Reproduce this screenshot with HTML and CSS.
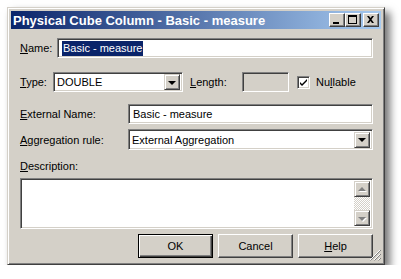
FILE: index.html
```html
<!DOCTYPE html>
<html lang="en">
<head>
  <meta charset="UTF-8" />
  <title>Physical Cube Column - Basic - measure</title>
  <link rel="stylesheet" href="styles.css">
</head>
<body>
  <div class="window">
    <div class="titlebar">
      <span class="title">Physical Cube Column - Basic - measure</span>
      <div class="caption-buttons">
        <span class="cap-btn">
          <svg width="14" height="12" viewBox="0 0 14 12"><rect x="3" y="8" width="6" height="2" fill="#000"/></svg>
        </span>
        <span class="cap-btn">
          <svg width="14" height="12" viewBox="0 0 14 12"><rect x="2.5" y="1.5" width="8" height="8" fill="none" stroke="#000"/><rect x="2" y="1" width="9" height="2" fill="#000"/></svg>
        </span>
        <span class="cap-btn close">
          <svg width="14" height="12" viewBox="0 0 14 12"><path d="M3 2h2l1.5 2 1.5-2h2l-2.5 3.5 2.5 3.5h-2l-1.5-2-1.5 2h-2l2.5-3.5z" fill="#000"/></svg>
        </span>
      </div>
    </div>

    <div class="content">
      <div class="row row-name">
        <span class="lbl lbl-name"><u>N</u>ame:</span>
        <div class="field grow"><span class="selected">Basic - measure</span></div>
      </div>

      <div class="row row-type">
        <span class="lbl lbl-type"><u>T</u>ype:</span>
        <div class="field combo combo-type">
          <span>DOUBLE</span>
          <span class="drop"><span class="arrow"></span></span>
        </div>
        <span class="lbl lbl-length"><u>L</u>ength:</span>
        <div class="field disabled length"></div>
        <span class="check">
          <svg width="9" height="9" viewBox="0 0 9 9"><path d="M1 4l2 2 5-5v2l-5 5-2-2z" fill="#000"/></svg>
        </span>
        <span class="check-lbl">Nu<u>l</u>lable</span>
      </div>

      <div class="row row-ext">
        <span class="lbl lbl-wide"><u>E</u>xternal Name:</span>
        <div class="field grow">Basic - measure</div>
      </div>

      <div class="row row-agg">
        <span class="lbl lbl-wide"><u>A</u>ggregation rule:</span>
        <div class="field combo grow">
          <span>External Aggregation</span>
          <span class="drop"><span class="arrow"></span></span>
        </div>
      </div>

      <div class="desc-lbl"><u>D</u>escription:</div>
      <div class="field textarea">
        <div class="scrollbar">
          <span class="sb-btn"><span class="arrow up"></span></span>
          <span class="sb-track"></span>
          <span class="sb-btn"><span class="arrow"></span></span>
        </div>
      </div>

      <div class="buttons">
        <span class="btn default">OK</span>
        <span class="btn">Cancel</span>
        <span class="btn"><u>H</u>elp</span>
      </div>
    </div>

    <svg class="grip" width="12" height="12" viewBox="0 0 12 12">
      <path d="M11 1L1 11M11 5L5 11M11 9L9 11" stroke="#fff" stroke-width="1"/>
      <path d="M12 1L1 12M12 5L5 12M12 9L9 12" stroke="#808080" stroke-width="1" transform="translate(0.5 -0.5)"/>
    </svg>
  </div>
</body>
</html>
```

FILE: styles.css
```css
html, body {
  margin: 0;
  padding: 0;
  background: #fff;
  font-family: "Liberation Sans", Arial, sans-serif;
  font-size: 11px;
  color: #000;
}

.window {
  position: relative;
  box-sizing: border-box;
  margin: 7px 0 0 7px;
  width: 378px;
  height: 258px;
  background: #d4d0c8;
  border: 1px solid;
  border-color: #d4d0c8 #404040 #404040 #d4d0c8;
  box-shadow: inset 1px 1px #fff, inset -1px -1px #808080, 5px 5px 8px rgba(0, 0, 0, 0.55);
  padding: 3px;
}

.titlebar {
  height: 18px;
  background: linear-gradient(to right, #0a246a, #a6caf0);
  display: flex;
  align-items: center;
  padding: 0 2px 0 2px;
}

.title {
  color: #fff;
  font-weight: bold;
  font-size: 13px;
  flex: 1;
  padding-left: 0;
}

.caption-buttons {
  display: flex;
  align-items: center;
}

.cap-btn {
  display: flex;
  align-items: center;
  justify-content: center;
  box-sizing: border-box;
  width: 16px;
  height: 14px;
  background: #d4d0c8;
  border: 1px solid;
  border-color: #fff #404040 #404040 #fff;
  box-shadow: inset -1px -1px #808080;
}

.cap-btn.close {
  margin-left: 2px;
}

.content {
  padding: 9px 8px 0 9px;
}

.row {
  display: flex;
  align-items: center;
}

.row-name {
  height: 20px;
}

.row-type {
  height: 20px;
  margin-top: 14px;
}

.row-ext {
  height: 20px;
  margin-top: 12px;
}

.row-agg {
  height: 21px;
  margin-top: 5px;
}

.lbl-name { width: 37px; }
.lbl-type { width: 33px; }
.lbl-length { width: 52px; margin-left: 7px; }
.lbl-wide { width: 108px; }

.field {
  box-sizing: border-box;
  height: 100%;
  background: #fff;
  border: 1px solid;
  border-color: #808080 #fff #fff #808080;
  box-shadow: inset 1px 1px #404040, inset -1px -1px #d4d0c8;
  display: flex;
  align-items: center;
  padding: 0 4px;
  white-space: nowrap;
}

.grow {
  flex: 1;
}

.selected {
  background: #0a246a;
  color: #fff;
  padding: 1px 1px 2px 1px;
}

.combo {
  padding: 0 2px 0 3px;
}

.combo-type {
  width: 130px;
}

.drop {
  margin-left: auto;
  box-sizing: border-box;
  width: 16px;
  height: 16px;
  background: #d4d0c8;
  border: 1px solid;
  border-color: #d4d0c8 #404040 #404040 #d4d0c8;
  box-shadow: inset 1px 1px #fff, inset -1px -1px #808080;
  display: flex;
  align-items: center;
  justify-content: center;
}

.arrow {
  width: 0;
  height: 0;
  border-left: 4px solid transparent;
  border-right: 4px solid transparent;
  border-top: 4px solid #000;
  margin-top: 1px;
}

.disabled {
  background: #d4d0c8;
}

.length {
  width: 47px;
}

.check {
  box-sizing: border-box;
  width: 13px;
  height: 13px;
  margin-left: 8px;
  background: #fff;
  border: 1px solid;
  border-color: #808080 #fff #fff #808080;
  box-shadow: inset 1px 1px #404040, inset -1px -1px #d4d0c8;
  display: flex;
  align-items: center;
  justify-content: center;
}

.check-lbl {
  margin-left: 6px;
}

.desc-lbl {
  margin-top: 10px;
  line-height: 13px;
}

.textarea {
  margin-top: 5px;
  height: 51px;
  padding: 2px;
  justify-content: flex-end;
  align-items: stretch;
}

.scrollbar {
  width: 16px;
  display: flex;
  flex-direction: column;
}

.sb-btn {
  box-sizing: border-box;
  height: 16px;
  background: #d4d0c8;
  border: 1px solid;
  border-color: #d4d0c8 #404040 #404040 #d4d0c8;
  box-shadow: inset 1px 1px #fff, inset -1px -1px #808080;
  display: flex;
  align-items: center;
  justify-content: center;
}

.sb-btn .arrow {
  border-top-color: #808080;
  filter: drop-shadow(1px 1px 0 #fff);
}

.sb-btn .arrow.up {
  border-top: none;
  border-bottom: 4px solid #808080;
  margin-top: -1px;
}

.sb-track {
  flex: 1;
  background: repeating-conic-gradient(#fff 0 25%, #d4d0c8 0 50%) 0 0 / 2px 2px;
}

.buttons {
  display: flex;
  justify-content: flex-end;
  gap: 5px;
  margin-top: 5px;
}

.btn {
  box-sizing: border-box;
  width: 75px;
  height: 24px;
  background: #d4d0c8;
  border: 1px solid;
  border-color: #fff #404040 #404040 #fff;
  box-shadow: inset -1px -1px #808080;
  display: flex;
  align-items: center;
  justify-content: center;
}

.btn.default {
  border-color: #000;
  box-shadow: inset 1px 1px #fff, inset -1px -1px #404040, inset -2px -2px #808080;
}

.grip {
  position: absolute;
  right: 3px;
  bottom: 3px;
}
```
